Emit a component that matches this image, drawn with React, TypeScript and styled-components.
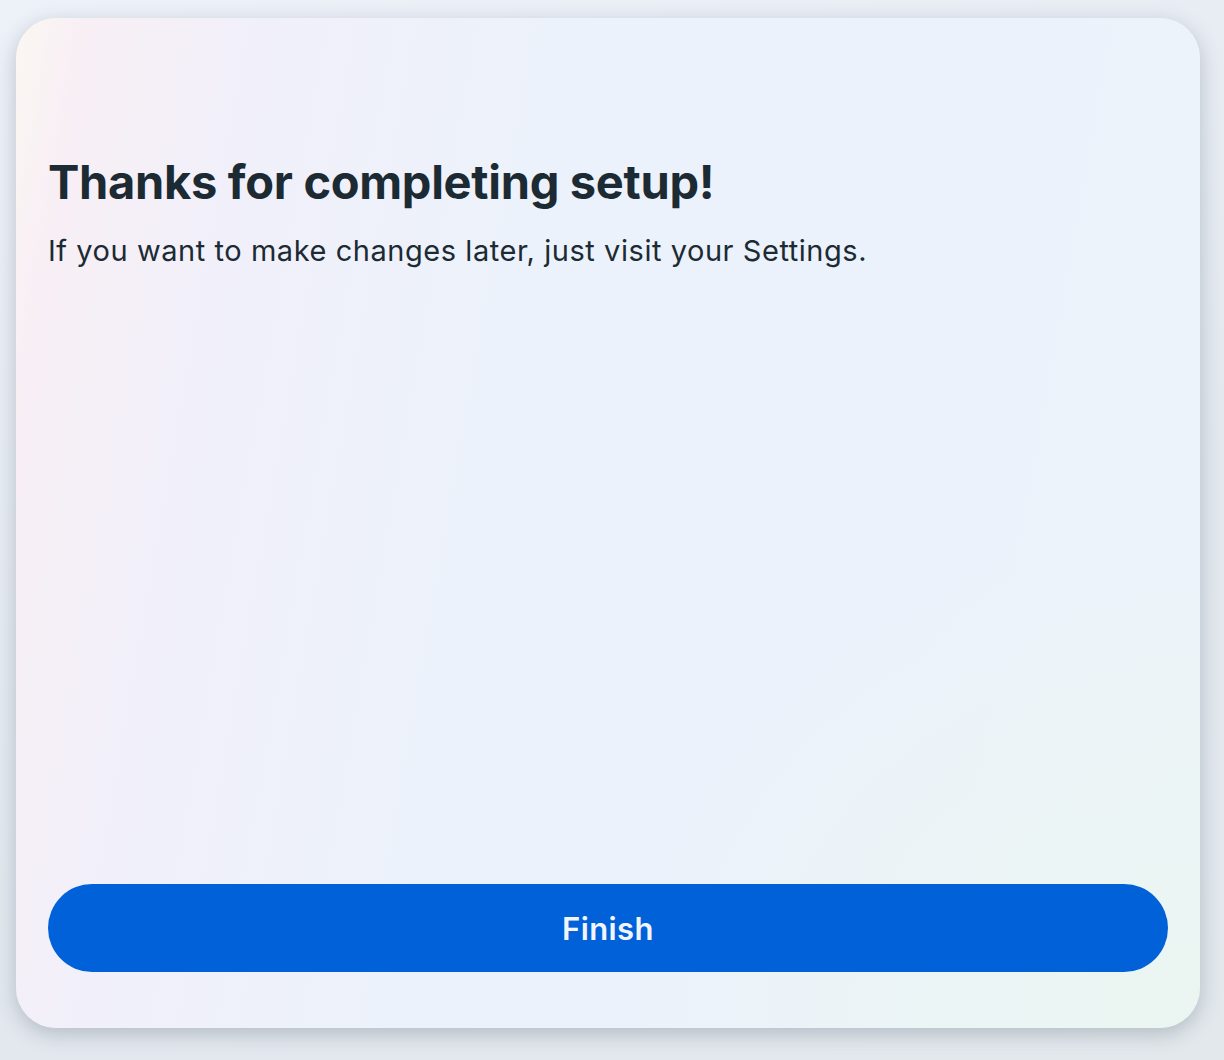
import styled, { createGlobalStyle } from "styled-components";

const GlobalStyle = createGlobalStyle`
  html, body {
    margin: 0;
    padding: 0;
    background: #e4e9f0;
    font-family: "Inter", "Liberation Sans", sans-serif;
  }
`;

const Page = styled.div`
  width: 1224px;
  height: 1060px;
  box-sizing: border-box;
  padding: 18px 24px 32px 16px;
  display: flex;
  background: linear-gradient(160deg, #edf1f8 0%, #e3e8ef 60%, #e2e8ec 100%);
`;

const Card = styled.div`
  flex: 1;
  border-radius: 40px;
  box-sizing: border-box;
  padding: 132px 32px 56px 32px;
  display: flex;
  flex-direction: column;
  box-shadow: 0 6px 20px rgba(60, 75, 95, 0.28);
  background:
    radial-gradient(ellipse at 100% 100%, rgba(234, 246, 240, 0.9) 0%, rgba(234, 246, 240, 0) 35%),
    linear-gradient(100deg, #fbf7f2 0%, #f8eff5 5%, #f1f0fa 18%, #ecf2fb 40%, #ecf2fb 75%, #eef4fb 100%);
`;

const Title = styled.h1`
  margin: 0;
  font-size: 47px;
  font-weight: 700;
  letter-spacing: -0.3px;
  line-height: 64px;
  color: #1c2b33;
`;

const Subtitle = styled.p`
  margin: 17px 0 0 0;
  font-size: 29px;
  font-weight: 400;
  letter-spacing: 0.55px;
  line-height: 40px;
  color: #1c2b33;
`;

const Spacer = styled.div`
  flex: 1;
`;

const Button = styled.button`
  height: 88px;
  width: 100%;
  border: none;
  border-radius: 44px;
  background: #0061d9;
  color: #f2f6fc;
  font-family: inherit;
  font-size: 31px;
  font-weight: 600;
  letter-spacing: 0.4px;
  cursor: pointer;
`;

export default function App() {
  return (
    <>
      <GlobalStyle />
      <Page>
        <Card>
          <Title>Thanks for completing setup!</Title>
          <Subtitle>If you want to make changes later, just visit your Settings.</Subtitle>
          <Spacer />
          <Button>Finish</Button>
        </Card>
      </Page>
    </>
  );
}
